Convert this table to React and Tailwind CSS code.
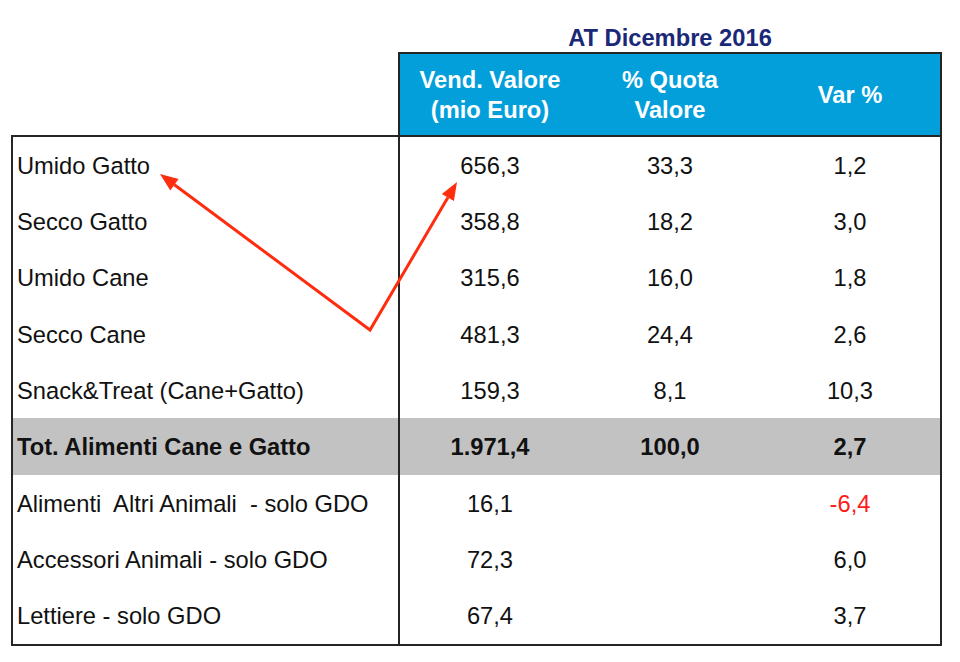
const rows = [
  { label: "Umido Gatto", v: "656,3", q: "33,3", p: "1,2" },
  { label: "Secco Gatto", v: "358,8", q: "18,2", p: "3,0" },
  { label: "Umido Cane", v: "315,6", q: "16,0", p: "1,8" },
  { label: "Secco Cane", v: "481,3", q: "24,4", p: "2,6" },
  { label: "Snack&Treat (Cane+Gatto)", v: "159,3", q: "8,1", p: "10,3" },
  { label: "Tot. Alimenti Cane e Gatto", v: "1.971,4", q: "100,0", p: "2,7", total: true },
  { label: "Alimenti\u00a0 Altri Animali\u00a0 - solo GDO", v: "16,1", q: "", p: "-6,4", neg: true },
  { label: "Accessori Animali - solo GDO", v: "72,3", q: "", p: "6,0" },
  { label: "Lettiere - solo GDO", v: "67,4", q: "", p: "3,7" },
];

function Arrows() {
  return (
    <svg className="pointer-events-none absolute left-0 top-0" width="960" height="662">
      <g stroke="#ff2d0f" strokeWidth="3" fill="none" strokeLinejoin="miter">
        <polyline points="174.4,184.7 370,330 447.9,197.5" />
      </g>
      <g fill="#ff2d0f">
        <polygon points="160,174 178.6,179.1 170.3,190.4" />
        <polygon points="457,182 453.9,201.1 441.9,193.9" />
      </g>
    </svg>
  );
}

export default function App() {
  return (
    <div
      className="relative h-[662px] w-[960px] overflow-hidden bg-white text-[#111]"
      style={{ fontFamily: '"Liberation Sans", Arial, sans-serif' }}
    >
      <div className="ml-[11px] w-[931px]">
        <div className="flex h-[52px]">
          <div className="w-[387px]" />
          <div className="flex w-[544px] items-end justify-center text-[23.7px] font-bold leading-[28px] text-[#1a2878]">
            AT Dicembre 2016
          </div>
        </div>

        <div className="flex">
          <div className="w-[387px]" />
          <div className="grid h-[83px] w-[544px] grid-cols-3 border-x-2 border-t-2 border-[#252525] bg-[#029fdb] text-[23.7px] font-bold leading-[30px] text-white">
            <div className="flex items-center justify-center text-center">
              Vend. Valore
              <br />
              (mio Euro)
            </div>
            <div className="flex items-center justify-center text-center">
              % Quota
              <br />
              Valore
            </div>
            <div className="flex items-center justify-center text-center">Var %</div>
          </div>
        </div>

        <div className="border-2 border-[#252525]">
          {rows.map((r) => (
            <div
              key={r.label}
              className={
                "flex h-[56.3px] items-center text-[23.7px] " +
                (r.total ? "bg-[#c2c2c2] font-bold" : "")
              }
            >
              <div className="flex h-full w-[387px] items-center border-r-2 border-[#252525] pl-[4px] pt-[3px] whitespace-nowrap">
                {r.label}
              </div>
              <div className="w-[180px] pt-[3px] text-center">{r.v}</div>
              <div className="w-[180px] pt-[3px] text-center">{r.q}</div>
              <div className={"w-[180px] pt-[3px] text-center " + (r.neg ? "text-[#ff1a1a]" : "")}>{r.p}</div>
            </div>
          ))}
        </div>
      </div>

      <Arrows />
    </div>
  );
}
